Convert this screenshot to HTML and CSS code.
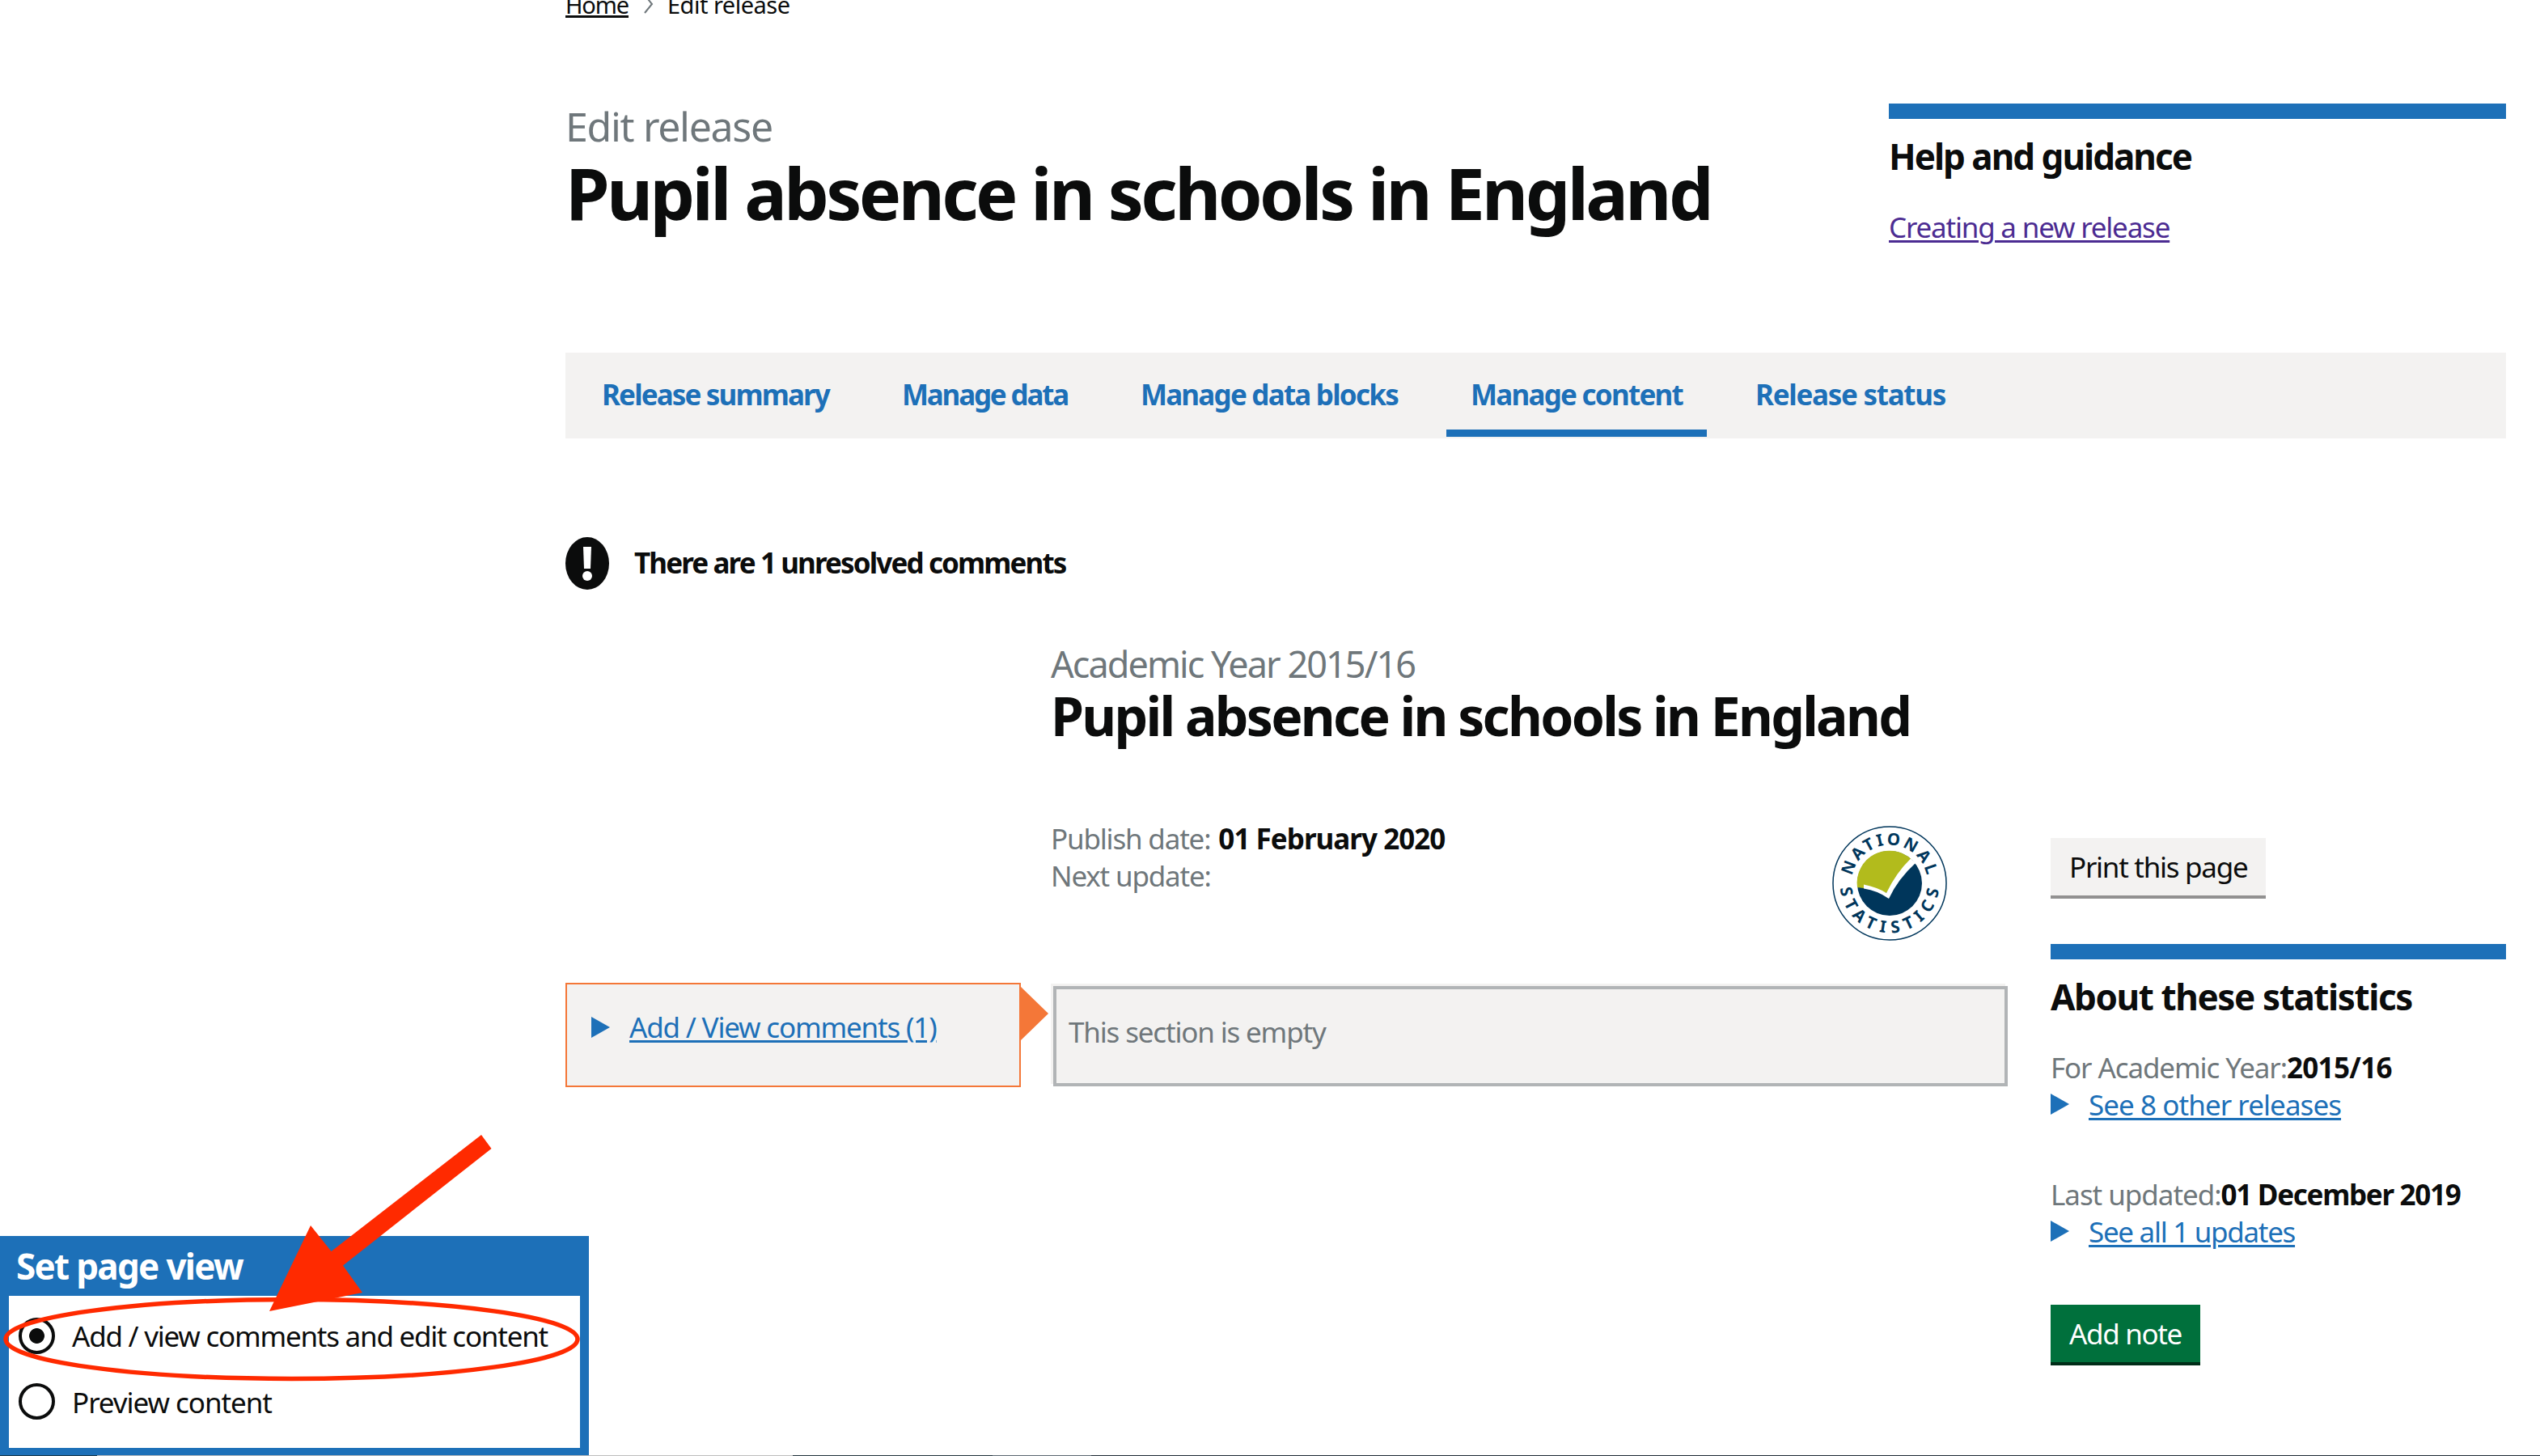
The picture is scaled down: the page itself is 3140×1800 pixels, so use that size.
FILE: index.html
```html
<!DOCTYPE html>
<html lang="en">
<head>
<meta charset="utf-8">
<title>Edit release</title>
<link rel="stylesheet" href="styles.css">
</head>
<body>
<div class="page">
  <nav class="breadcrumbs">
    <a href="#" class="crumb-home">Home</a>
    <svg class="chevron" width="14" height="24" viewBox="0 0 14 24"><path d="M2 1 L11 12 L2 23" fill="none" stroke="#6f777b" stroke-width="2"/></svg>
    <span class="crumb-current">Edit release</span>
  </nav>
  <header class="header">
    <div>
      <p class="caption-xl">Edit release</p>
      <h1 class="heading-xl">Pupil absence in schools in England</h1>
    </div>
    <aside class="panel">
      <h2 class="heading-m t-help">Help and guidance</h2>
      <a href="#" class="visited">Creating a new release</a>
    </aside>
  </header>
  <nav class="tabs">
    <a href="#" class="tab"><span class="t-n1">Release summary</span></a>
    <a href="#" class="tab"><span class="t-n2">Manage data</span></a>
    <a href="#" class="tab"><span class="t-n3">Manage data blocks</span></a>
    <a href="#" class="tab tab-current"><span class="t-n4">Manage content</span></a>
    <a href="#" class="tab"><span class="t-n5">Release status</span></a>
  </nav>
  <div class="warning">
    <svg width="54" height="65" viewBox="0 0 54 65"><ellipse cx="27" cy="32.5" rx="27" ry="32.5" fill="#0b0c0c"/><path d="M22 12H32L31 39H23Z" fill="#fff"/><circle cx="27" cy="48" r="6" fill="#fff"/></svg>
    <strong class="t-warn">There are 1 unresolved comments</strong>
  </div>
  <main class="content">
    <div class="title">
      <p class="caption-l">Academic Year 2015/16</p>
      <h2 class="heading-l">Pupil absence in schools in England</h2>
    </div>
    <div class="meta">
      <div class="dates">
        <p><span class="muted">Publish date:</span><strong class="pub-date">01 February 2020</strong></p>
        <p><span class="muted">Next update:</span></p>
      </div>
      <svg class="badge" width="142" height="142" viewBox="-71 -71 142 142">
        <defs><path id="arc-top" d="M-46.2 -9 A47 47 0 0 1 46.2 -9"/><path id="arc-bottom" d="M-61.2 6 A61.5 61.5 0 0 0 61.2 6"/></defs>
        <circle r="70" fill="#fff" stroke="#00365b" stroke-width="1.5"/>
        <circle r="40" fill="#00365b"/>
        <path d="M-40 5 A40 40 0 0 1 27 -29.5 L-4 12 L-31 2 L-32 6Z" fill="#b2bb1c"/>
        <path d="M-32 1.5 Q-15 5 -4 12 Q8 -13 26 -30.5 L32 -25 Q10 -5 -1 19 Q-15 9 -32 6.5Z" fill="#fff"/>
        <text class="badge-text"><textPath href="#arc-top" textLength="129">NATIONAL</textPath></text>
        <text class="badge-text"><textPath href="#arc-bottom" textLength="179">STATISTICS</textPath></text>
      </svg>
    </div>
    <div class="comments">
      <svg class="marker" width="23" height="26" viewBox="0 0 23 26"><path d="M0 0L23 13L0 26Z" fill="#1d70b8"/></svg>
      <a href="#" class="link t-com">Add / View comments (1)</a>
    </div>
    <div class="section"><span class="muted t-empty">This section is empty</span></div>
    <aside class="sidebar">
      <button class="button secondary">Print this page</button>
      <div class="panel about">
        <h2 class="heading-m t-about">About these statistics</h2>
        <p><span class="muted t-for">For Academic Year:</span><strong class="t-year">2015/16</strong></p>
        <div class="details"><svg class="marker" width="23" height="26" viewBox="0 0 23 26"><path d="M0 0L23 13L0 26Z" fill="#1d70b8"/></svg><a href="#" class="link t-releases">See 8 other releases</a></div>
        <p class="updated"><span class="muted t-last">Last updated:</span><strong class="t-dec">01 December 2019</strong></p>
        <div class="details"><svg class="marker" width="23" height="26" viewBox="0 0 23 26"><path d="M0 0L23 13L0 26Z" fill="#1d70b8"/></svg><a href="#" class="link t-updates">See all 1 updates</a></div>
      </div>
      <button class="button primary">Add note</button>
    </aside>
  </main>
</div>
<div class="page-view">
  <h2 class="page-view-title">Set page view</h2>
  <div class="page-view-body">
    <label class="option"><span class="radio checked"></span><span class="option-edit">Add / view comments and edit content</span></label>
    <label class="option"><span class="radio"></span><span class="option-preview">Preview content</span></label>
  </div>
</div>
<svg class="annotation" width="740" height="420" viewBox="0 1380 740 420">
  <ellipse cx="360.5" cy="1655.5" rx="353.5" ry="49" fill="none" stroke="#ff2a00" stroke-width="5.5"/>
  <path d="M595 1403L607.5 1420L424 1564.5L448 1598L333 1621L384 1515L409.5 1547Z" fill="#ff2a00"/>
</svg>
<div class="edge"><i class="e1"></i><i class="e2"></i><i class="e3"></i><i class="e4"></i><i class="e5"></i></div>
</body>
</html>
```
FILE: styles.css
```css
* { box-sizing: border-box; }
body { margin: 0; width: 3140px; height: 1800px; overflow: hidden; position: relative; background: #fff; color: #0b0c0c; font: 35px/46px "Noto Sans", sans-serif; }
p, h1, h2 { margin: 0; }
p, h1, h2, a, label, strong { white-space: nowrap; }
strong { font-weight: 700; }
.muted { color: #6f777b; letter-spacing: -1.19px; }

.page { display: flex; flex-direction: column; width: 2399px; margin-left: 699px; }
.breadcrumbs { display: flex; align-items: center; height: 40px; margin-top: -14px; font-size: 29px; line-height: 40px; }
.crumb-home { color: #0b0c0c; letter-spacing: -1.13px; text-decoration-thickness: 3px; text-underline-offset: 2px; }
.crumb-current { letter-spacing: -0.5px; }
.chevron { margin: 0 16px 2px 18px; }

.header { display: grid; grid-template-columns: 1fr 763px; height: 308px; margin-top: 102px; }
.caption-xl { color: #6f777b; font-size: 50px; line-height: 54px; letter-spacing: -1.32px; padding-top: 1px; }
.heading-xl { font-size: 88px; line-height: 100px; margin-top: 5px; letter-spacing: -3.62px; }
.panel { border-top: 19px solid #1d70b8; padding-top: 18px; }
.heading-m { font-size: 44px; line-height: 56px; margin-bottom: 37px; }
.t-help { letter-spacing: -1.99px; }
.visited, .link { text-decoration-thickness: 3px; text-underline-offset: 3px; }
.visited { color: #4c2c92; display: inline-block; letter-spacing: -1.2px; }
.link { color: #1d70b8; }

.tabs { display: flex; gap: 30px; height: 106px; padding: 0 15px 2px; background: #f3f2f1; }
.tab { padding: 29px 30px 0; color: #1d70b8; font-weight: 700; text-decoration: none; }
.tab-current { border-bottom: 9px solid #1d70b8; }
.t-n1 { letter-spacing: -1.86px; }
.t-n2 { letter-spacing: -2.19px; }
.t-n3 { letter-spacing: -1.77px; }
.t-n4 { letter-spacing: -1.75px; }
.t-n5 { letter-spacing: -1.28px; }

.warning { display: flex; align-items: center; gap: 31px; height: 65px; margin-top: 122px; }
.warning strong { padding-bottom: 1px; letter-spacing: -1.88px; }

.content { display: grid; grid-template-columns: 563px 1180px 563px; column-gap: 37px; grid-template-rows: 284px 202px 1fr; grid-template-areas: ". title ." ". meta side" "comments section side"; }
.title { grid-area: title; padding-top: 66px; }
.caption-l { color: #6f777b; font-size: 45px; line-height: 52px; letter-spacing: -1.95px; }
.heading-l { font-size: 66px; line-height: 70px; margin-top: 2px; letter-spacing: -2.71px; }
.meta { grid-area: meta; display: flex; justify-content: space-between; align-items: flex-start; padding-right: 72px; }
.dates { padding-top: 1px; }
.pub-date { margin-left: 10px; letter-spacing: -0.97px; }
.badge { margin-top: 8px; }
.badge-text { font-size: 20.5px; font-weight: 700; fill: #00365b; }

.comments { grid-area: comments; position: relative; display: flex; gap: 24px; align-items: flex-start; height: 129px; padding: 30px 0 0 30px; border: 2px solid #f47738; background: #f3f2f1; }
.comments .marker { margin-top: 10px; }
.comments::after { content: ""; position: absolute; left: 560px; top: 2px; border-left: 35px solid #f47738; border-top: 34px solid transparent; border-bottom: 34px solid transparent; }
.t-com { letter-spacing: -1.18px; }
.section { grid-area: section; height: 124px; margin: 4px -3px 0 3px; padding: 30px 15px; border: 4px solid #b1b4b6; background: #f3f2f1; box-shadow: -3px -3px 0 #f3f2f1; }
.t-empty { letter-spacing: -1.17px; }

.sidebar { grid-area: side; margin-left: 19px; width: 563px; padding-top: 23px; }
.button { display: block; height: 71px; padding: 1px 0 0 23px; border: 0; font: inherit; line-height: 70px; text-align: left; white-space: nowrap; }
.secondary { width: 266px; background: #f3f2f1; color: #0b0c0c; letter-spacing: -1.28px; box-shadow: 0 4px 0 #929191; }
.primary { width: 185px; background: #00703c; color: #fff; letter-spacing: -1.34px; box-shadow: 0 4px 0 #002d18; margin-top: 67px; }
.about { margin-top: 60px; }
.t-about { letter-spacing: -1.39px; }
.t-for { letter-spacing: -1.11px; }
.t-year { letter-spacing: -0.67px; }
.t-releases { letter-spacing: -0.94px; }
.t-last { letter-spacing: -1.04px; }
.t-dec { letter-spacing: -1.29px; }
.t-updates { letter-spacing: -1.3px; }
.details { display: flex; gap: 24px; }
.details .marker { margin-top: 9px; }
.updated { margin-top: 65px; }

.page-view { position: absolute; left: 0; bottom: 1px; width: 728px; height: 271px; padding: 0 11px 9px; background: #1d70b8; }
.page-view-title { height: 74px; padding: 9px 9px; color: #fff; font-size: 44px; line-height: 56px; letter-spacing: -1.7px; }
.page-view-body { height: 188px; padding: 24px 12px; background: #fff; }
.option { display: flex; align-items: center; gap: 21px; height: 51px; margin-bottom: 30px; }
.option-edit { letter-spacing: -1.24px; padding-top: 1px; }
.option-preview { letter-spacing: -1.05px; padding-top: 2px; }
.radio { width: 45px; height: 45px; border: 4px solid #0b0c0c; border-radius: 50%; background: #fff; }
.checked { background: radial-gradient(circle, #0b0c0c 9px, #fff 9.8px); }

.annotation { position: absolute; left: 0; top: 1380px; }
.edge { position: absolute; left: 0; bottom: 0; display: flex; width: 3140px; height: 1px; }
.e1 { width: 120px; background: #1d3b4c; }
.e2 { width: 860px; background: #bfbfbf; }
.e3 { width: 247px; background: #263740; }
.e4 { width: 122px; background: #5f6b75; }
.e5 { flex: 1; background: #232f3a; }
```
